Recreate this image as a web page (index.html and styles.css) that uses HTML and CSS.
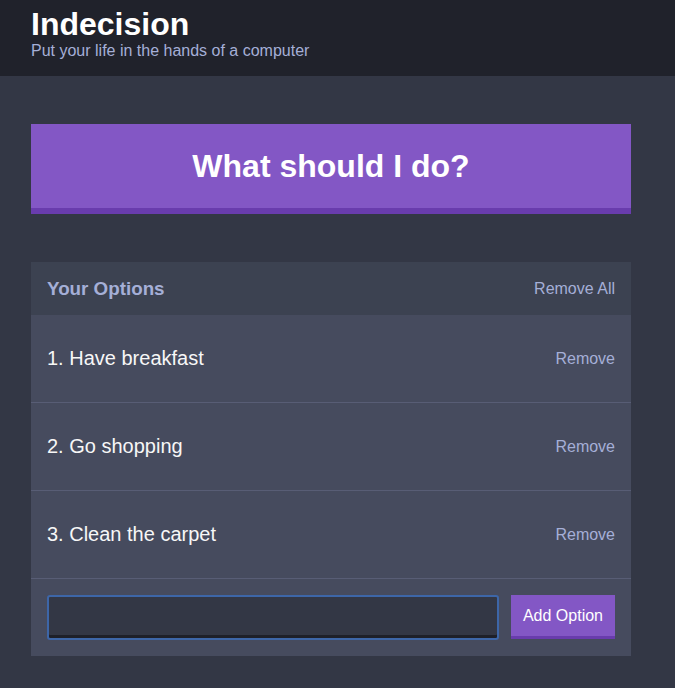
FILE: index.html
```html
<!DOCTYPE html>
<html lang="en">
<head>
<meta charset="utf-8">
<title>Indecision</title>
<link rel="stylesheet" href="styles.css">
</head>
<body>
<header class="header">
  <div class="container">
    <h1 class="header__title">Indecision</h1>
    <h2 class="header__subtitle">Put your life in the hands of a computer</h2>
  </div>
</header>
<main class="container">
  <button class="big-button">What should I do?</button>
  <section class="widget">
    <div class="widget-header">
      <h3 class="widget-header__title">Your Options</h3>
      <button class="button--link">Remove All</button>
    </div>
    <div class="option">
      <p class="option__text">1. Have breakfast</p>
      <button class="button--link">Remove</button>
    </div>
    <div class="option">
      <p class="option__text">2. Go shopping</p>
      <button class="button--link">Remove</button>
    </div>
    <div class="option">
      <p class="option__text">3. Clean the carpet</p>
      <button class="button--link">Remove</button>
    </div>
    <form class="add-option">
      <input class="add-option__input" type="text" name="option">
      <button class="button" type="button">Add Option</button>
    </form>
  </section>
</main>
</body>
</html>
```

FILE: styles.css
```css
* { box-sizing: border-box; }

html, body {
  margin: 0;
  padding: 0;
}

body {
  background: #333745;
  font-family: "Liberation Sans", Arial, Helvetica, sans-serif;
  color: #f7f7f7;
  min-height: 688px;
}

button, input {
  font-family: inherit;
}

.container {
  width: 600px;
  margin: 0 0 0 31px;
}

.header {
  background: #20222b;
  padding: 7px 0 16px;
}

.header__title {
  margin: 0;
  font-size: 32px;
  line-height: 34px;
  font-weight: bold;
  color: #ffffff;
}

.header__subtitle {
  margin: 1px 0 0;
  font-size: 16px;
  line-height: 18px;
  font-weight: normal;
  color: #a5afd7;
}

.big-button {
  display: block;
  width: 100%;
  margin: 48px 0 48px;
  padding: 24px 0;
  background: #8357c5;
  border: none;
  border-bottom: 6px solid #693cad;
  color: #ffffff;
  font-size: 32px;
  line-height: 36px;
  font-weight: bold;
  cursor: pointer;
}

.widget {
  background: #464b5e;
}

.widget-header {
  background: #3c4251;
  display: flex;
  justify-content: space-between;
  align-items: center;
  padding: 16px;
}

.widget-header__title {
  margin: 0;
  font-size: 18.8px;
  line-height: 21px;
  font-weight: bold;
  color: #a5afd7;
}

.button--link {
  background: none;
  border: none;
  padding: 0;
  color: #a5afd7;
  font-size: 16px;
  line-height: 18px;
  cursor: pointer;
}

.option {
  display: flex;
  justify-content: space-between;
  align-items: center;
  padding: 32px 16px;
  border-bottom: 1px solid #585d75;
}

.option__text {
  margin: 0;
  font-size: 20px;
  line-height: 23px;
  color: #f7f7f7;
}

.add-option {
  display: flex;
  align-items: flex-start;
  padding: 16px;
  margin: 0;
}

.add-option__input {
  flex-grow: 1;
  height: 45px;
  margin: 0 12px 0 0;
  background: #333745;
  border: 2px solid #3d66a8;
  border-radius: 3px;
  box-shadow: inset 0 -3px 0 #1e2029;
  color: #f7f7f7;
  font-size: 16px;
  padding: 10px;
  outline: none;
}

.button {
  background: #8357c5;
  border: none;
  border-bottom: 3px solid #693cad;
  color: #ffffff;
  font-size: 16px;
  line-height: 17px;
  padding: 12px;
  cursor: pointer;
}
```
